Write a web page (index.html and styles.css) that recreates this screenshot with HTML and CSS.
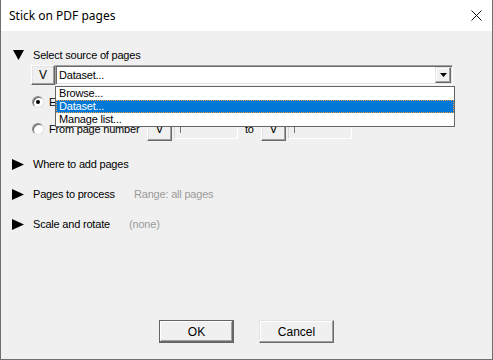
FILE: index.html
```html
<!DOCTYPE html>
<html>
<head>
<meta charset="utf-8">
<link rel="stylesheet" href="styles.css">
</head>
<body>
<div class="window">
  <div class="titlebar">
    <span class="title">Stick on PDF pages</span>
    <svg class="close" width="11" height="11" viewBox="0 0 11 11"><path d="M0.5 0.5L10.5 10.5M10.5 0.5L0.5 10.5" stroke="#111" stroke-width="1"/></svg>
  </div>
  <div class="body">
    <div class="sec-head first">
      <span class="tri"><svg width="11" height="10" viewBox="0 0 11 10"><path d="M0 0H11L5.5 10Z" fill="#000"/></svg></span>
      <span>Select source of pages</span>
    </div>
    <div class="combo-row">
      <div class="vbtn">V</div>
      <div class="combo">
        <span class="combo-text">Dataset...</span>
        <span class="combo-arrow"><svg width="7" height="4" viewBox="0 0 7 4"><path d="M0 0H7L3.5 4Z" fill="#000"/></svg></span>
        <div class="dropdown">
          <div class="item">Browse...</div>
          <div class="item sel">Dataset...</div>
          <div class="item">Manage list...</div>
        </div>
      </div>
    </div>
    <div class="radio-row">
      <span class="radio on"></span>
      <span>Entire document</span>
    </div>
    <div class="radio-row second">
      <span class="radio"></span>
      <span class="rlabel">From page number</span>
      <div class="vbtn small">V</div>
      <div class="edit"><span class="caret"></span></div>
      <span class="to">to</span>
      <div class="vbtn small">V</div>
      <div class="edit"><span class="caret"></span></div>
    </div>
    <div class="sec-head">
      <span class="tri"><svg width="12" height="11" viewBox="0 0 12 11"><path d="M0 0L12 5.5L0 11Z" fill="#000"/></svg></span>
      <span>Where to add pages</span>
    </div>
    <div class="sec-head">
      <span class="tri"><svg width="12" height="11" viewBox="0 0 12 11"><path d="M0 0L12 5.5L0 11Z" fill="#000"/></svg></span>
      <span class="lbl-pages">Pages to process</span>
      <span class="hint">Range: all pages</span>
    </div>
    <div class="sec-head">
      <span class="tri"><svg width="12" height="11" viewBox="0 0 12 11"><path d="M0 0L12 5.5L0 11Z" fill="#000"/></svg></span>
      <span class="lbl-scale">Scale and rotate</span>
      <span class="hint">(none)</span>
    </div>
    <div class="footer">
      <div class="btn default">OK</div>
      <div class="btn">Cancel</div>
    </div>
  </div>
</div>
</body>
</html>
```
FILE: styles.css
```css
html, body {
  margin: 0;
  padding: 0;
  background: #f0f0f0;
}
.window {
  width: 493px;
  height: 360px;
  box-sizing: border-box;
  border: 1px solid #6f6f6f;
  border-top: none;
  display: flex;
  flex-direction: column;
  font-family: "Liberation Sans", Arial, sans-serif;
  font-size: 11px;
  letter-spacing: -0.2px;
  color: #000;
}
.titlebar {
  height: 31px;
  background: #fff;
  display: flex;
  align-items: center;
  padding-left: 8px;
  padding-right: 10px;
  flex: none;
}
.title {
  font-family: "Noto Sans", "Open Sans", sans-serif;
  font-size: 12px;
  letter-spacing: 0;
  color: #000;
  flex: 1;
  margin-top: -1px;
}
.close {
  display: block;
  margin-top: -1px;
}
.body {
  flex: 1;
  display: flex;
  flex-direction: column;
  padding: 16px 0 16px 11px;
  background: #f0f0f0;
}
.sec-head {
  height: 16px;
  display: flex;
  align-items: center;
  margin-top: 14px;
}
.sec-head.first {
  margin-top: 0;
}
.sec-head.first .tri {
  padding-left: 1px;
  width: 20px;
}
.tri {
  width: 21px;
  display: flex;
  align-items: center;
}
.tri svg { display: block; }
.radio-row.second + .sec-head { margin-top: 15px; }
.lbl-pages { width: 101px; }
.lbl-scale { width: 96px; }
.hint { color: #9b9b9b; }
.combo-row {
  margin-top: 2px;
  margin-left: 19px;
  display: flex;
  height: 20px;
}
.vbtn {
  width: 24px;
  height: 20px;
  box-sizing: border-box;
  border: 1px solid;
  border-color: #fff #696969 #696969 #fff;
  box-shadow: inset -1px -1px 0 #a0a0a0, inset 1px 1px 0 #e3e3e3;
  background: #f0f0f0;
  display: flex;
  align-items: center;
  justify-content: center;
  font-size: 12px;
  letter-spacing: 0;
}
.combo {
  position: relative;
  width: 398px;
  height: 20px;
  box-sizing: border-box;
  border: 1px solid;
  border-color: #a0a0a0 #fff #fff #a0a0a0;
  box-shadow: inset 1px 1px 0 #696969, inset -1px -1px 0 #e3e3e3;
  background: #fff;
  display: flex;
  align-items: center;
  padding-left: 3px;
}
.combo-text { flex: 1; }
.combo-arrow {
  width: 16px;
  height: 16px;
  box-sizing: border-box;
  margin-right: 1px;
  border: 1px solid;
  border-color: #e3e3e3 #696969 #696969 #e3e3e3;
  box-shadow: inset -1px -1px 0 #a0a0a0, inset 1px 1px 0 #fff;
  background: #f0f0f0;
  display: flex;
  align-items: center;
  justify-content: center;
}
.combo-arrow svg { display: block; }
.dropdown {
  position: absolute;
  left: -1px;
  top: 20px;
  width: 400px;
  box-sizing: border-box;
  border: 1px solid #646464;
  background: #fff;
  z-index: 5;
}
.item {
  height: 13px;
  line-height: 13px;
  padding-left: 3px;
  box-sizing: border-box;
}
.item.sel {
  background: #0078d7;
  color: #fff;
  outline: 1px dotted #f0a040;
  outline-offset: -1px;
}
.radio-row {
  display: flex;
  align-items: center;
  height: 16px;
  margin-top: 9px;
  margin-left: 20px;
}
.radio-row.second {
  height: 24px;
  margin-top: 7px;
}
.radio {
  width: 12px;
  height: 12px;
  box-sizing: border-box;
  border-radius: 50%;
  border: 1px solid;
  border-color: #8a8a8a #e3e3e3 #e3e3e3 #8a8a8a;
  box-shadow: inset 1px 1px 0 #696969;
  background: #fff;
  margin-right: 5px;
  position: relative;
  flex: none;
}
.radio.on::after {
  content: "";
  position: absolute;
  left: 3px;
  top: 3px;
  width: 4px;
  height: 4px;
  border-radius: 50%;
  background: #000;
}
.rlabel { width: 98px; white-space: nowrap; }
.vbtn.small {
  width: 25px;
  height: 24px;
}
.edit {
  width: 64px;
  height: 22px;
  box-sizing: border-box;
  margin-left: 2px;
  align-self: flex-start;
  border: 1px solid;
  border-color: #d8d8d8 #fff #fff #d8d8d8;
  background: #f0f0f0;
  position: relative;
}
.caret {
  position: absolute;
  left: 5px;
  top: 8px;
  width: 1px;
  height: 7px;
  background: #777;
}
.to {
  width: 23px;
  padding-left: 7px;
  box-sizing: border-box;
}
.footer {
  margin-top: auto;
  margin-left: -11px;
  display: flex;
  justify-content: center;
  gap: 25px;
}
.btn {
  width: 75px;
  height: 23px;
  box-sizing: border-box;
  border: 1px solid;
  border-color: #e3e3e3 #696969 #696969 #e3e3e3;
  box-shadow: inset -1px -1px 0 #a0a0a0, inset 1px 1px 0 #fff;
  background: #f0f0f0;
  display: flex;
  align-items: center;
  justify-content: center;
  font-size: 12px;
  letter-spacing: 0;
}
.btn.default {
  border-color: #646464;
  box-shadow: inset -1px -1px 0 #696969, inset 1px 1px 0 #fff, inset -2px -2px 0 #a0a0a0;
}
```
